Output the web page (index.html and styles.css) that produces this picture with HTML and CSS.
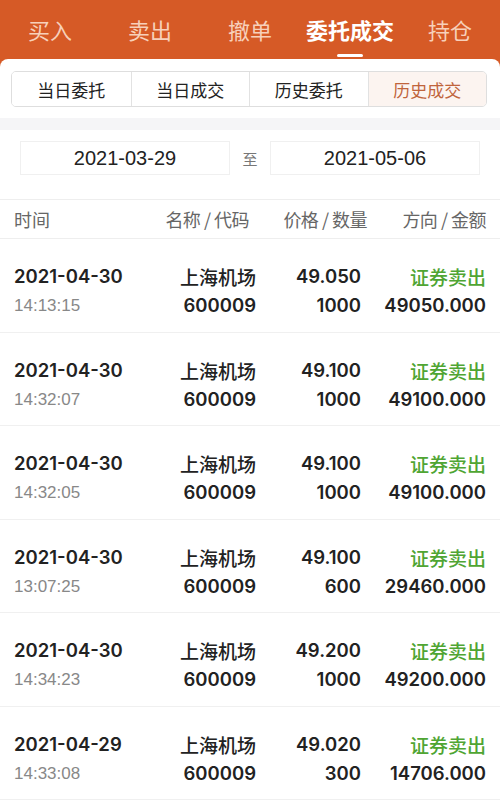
FILE: index.html
```html
<!DOCTYPE html>
<html lang="zh-CN">
<head>
    <meta charset="UTF-8">
    <meta name="viewport" content="width=device-width, initial-scale=1.0">
    <title>委托成交</title>
    <link rel="stylesheet" href="styles.css">
</head>
<body>

    <header class="top-bar">
        <nav class="top-tabs">
            <a href="#">买入</a>
            <a href="#">卖出</a>
            <a href="#">撤单</a>
            <a href="#" class="active">委托成交</a>
            <a href="#">持仓</a>
        </nav>
    </header>

    <main class="sheet">
        <div class="segments">
            <button>当日委托</button>
            <button>当日成交</button>
            <button>历史委托</button>
            <button class="active">历史成交</button>
        </div>

        <div class="gap"></div>

        <div class="date-range">
            <div class="date-box">2021-03-29</div>
            <span class="to">至</span>
            <div class="date-box">2021-05-06</div>
        </div>

        <div class="list-head">
            <span>时间</span>
            <span>名称 / 代码</span>
            <span>价格 / 数量</span>
            <span>方向 / 金额</span>
        </div>

        <div id="rows"></div>
    </main>

    <script>
        // history deals
        const deals = [
            ["2021-04-30", "14:13:15", "49.050", "1000", "49050.000"],
            ["2021-04-30", "14:32:07", "49.100", "1000", "49100.000"],
            ["2021-04-30", "14:32:05", "49.100", "1000", "49100.000"],
            ["2021-04-30", "13:07:25", "49.100", "600", "29460.000"],
            ["2021-04-30", "14:34:23", "49.200", "1000", "49200.000"],
            ["2021-04-29", "14:33:08", "49.020", "300", "14706.000"]
        ];

        const rows = document.getElementById("rows");
        deals.forEach(function(d) {
            const row = document.createElement("div");
            row.className = "deal";
            row.innerHTML =
                '<span class="date">' + d[0] + '</span>' +
                '<span class="name">上海机场</span>' +
                '<span class="num">' + d[2] + '</span>' +
                '<span class="dir">证券卖出</span>' +
                '<span class="time">' + d[1] + '</span>' +
                '<span class="num">600009</span>' +
                '<span class="num">' + d[3] + '</span>' +
                '<span class="num">' + d[4] + '</span>';
            rows.appendChild(row);
        });
    </script>

</body>
</html>
```

FILE: styles.css
```css
body {
    margin: 0;
    padding: 0;
    background-color: #d65a26;
    font-family: "Liberation Sans", "Noto Sans CJK SC", sans-serif;
    color: #222;
}

.top-bar {
    height: 59px;
}

.top-tabs {
    display: grid;
    grid-template-columns: repeat(5, 1fr);
}

.top-tabs a {
    position: relative;
    height: 59px;
    line-height: 58px;
    text-align: center;
    font-family: "Noto Sans CJK SC", sans-serif;
    font-size: 22px;
    color: #f7d0ba;
    text-decoration: none;
}

.top-tabs a.active {
    color: #fff;
    font-weight: bold;
}

.top-tabs a.active::after {
    content: "";
    position: absolute;
    left: 37px;
    right: 37px;
    bottom: 2px;
    height: 3px;
    border-radius: 2px;
    background-color: #fff;
}

.sheet {
    background-color: #fff;
    border-radius: 8px 8px 0 0;
    padding-top: 12px;
    min-height: 745px;
}

.segments {
    display: grid;
    grid-template-columns: repeat(4, 1fr);
    margin: 0 13px 0 11px;
    height: 34px;
    border: 1px solid #dedede;
    border-radius: 5px;
    overflow: hidden;
}

.segments button {
    border: none;
    border-left: 1px solid #e2e2e2;
    background-color: #fff;
    font-family: "Noto Sans CJK SC", sans-serif;
    font-size: 17px;
    color: #222;
    padding: 0;
}

.segments button:first-child {
    border-left: none;
}

.segments button.active {
    background-color: #fcf4f0;
    color: #c0643c;
}

.gap {
    height: 12px;
    margin-top: 11px;
    background-color: #f5f5f7;
}

.date-range {
    display: flex;
    align-items: center;
    padding: 11px 20px 24px;
    border-bottom: 1px solid #eeeeee;
}

.date-box {
    flex: 1;
    height: 32px;
    line-height: 32px;
    border: 1px solid #f0f0f0;
    text-align: center;
    font-size: 20px;
    color: #222;
}

.to {
    width: 40px;
    text-align: center;
    font-family: "Noto Sans CJK SC", sans-serif;
    font-size: 15px;
    color: #777;
}

.list-head {
    display: grid;
    grid-template-columns: 1fr 117px 118px 119px;
    padding: 0 14px;
    height: 38px;
    line-height: 38px;
    border-bottom: 1px solid #eeeeee;
    font-family: "Noto Sans CJK SC", sans-serif;
    font-size: 18px;
    color: #666;
    white-space: nowrap;
}

.list-head span {
    text-align: right;
    letter-spacing: -0.5px;
}

.list-head span:first-child {
    text-align: left;
    letter-spacing: 0;
}

.deal {
    display: grid;
    grid-template-columns: 1fr 110px 105px 125px;
    grid-auto-rows: 29px;
    padding: 23px 14px 11.5px;
    border-bottom: 1px solid #f0f0f0;
    font-family: "Inter", "Noto Sans CJK SC", sans-serif;
    font-size: 18.5px;
    font-weight: 600;
    line-height: 29px;
}

.deal span {
    text-align: right;
}

.deal .date {
    text-align: left;
}

.deal .time {
    text-align: left;
    font-family: "Liberation Sans", sans-serif;
    font-weight: normal;
    font-size: 17px;
    color: #888;
}

.deal .name,
.deal .dir {
    font-family: "Noto Sans CJK SC", sans-serif;
    font-weight: 500;
    font-size: 19px;
}

.deal .dir {
    color: #4fa533;
}
```
